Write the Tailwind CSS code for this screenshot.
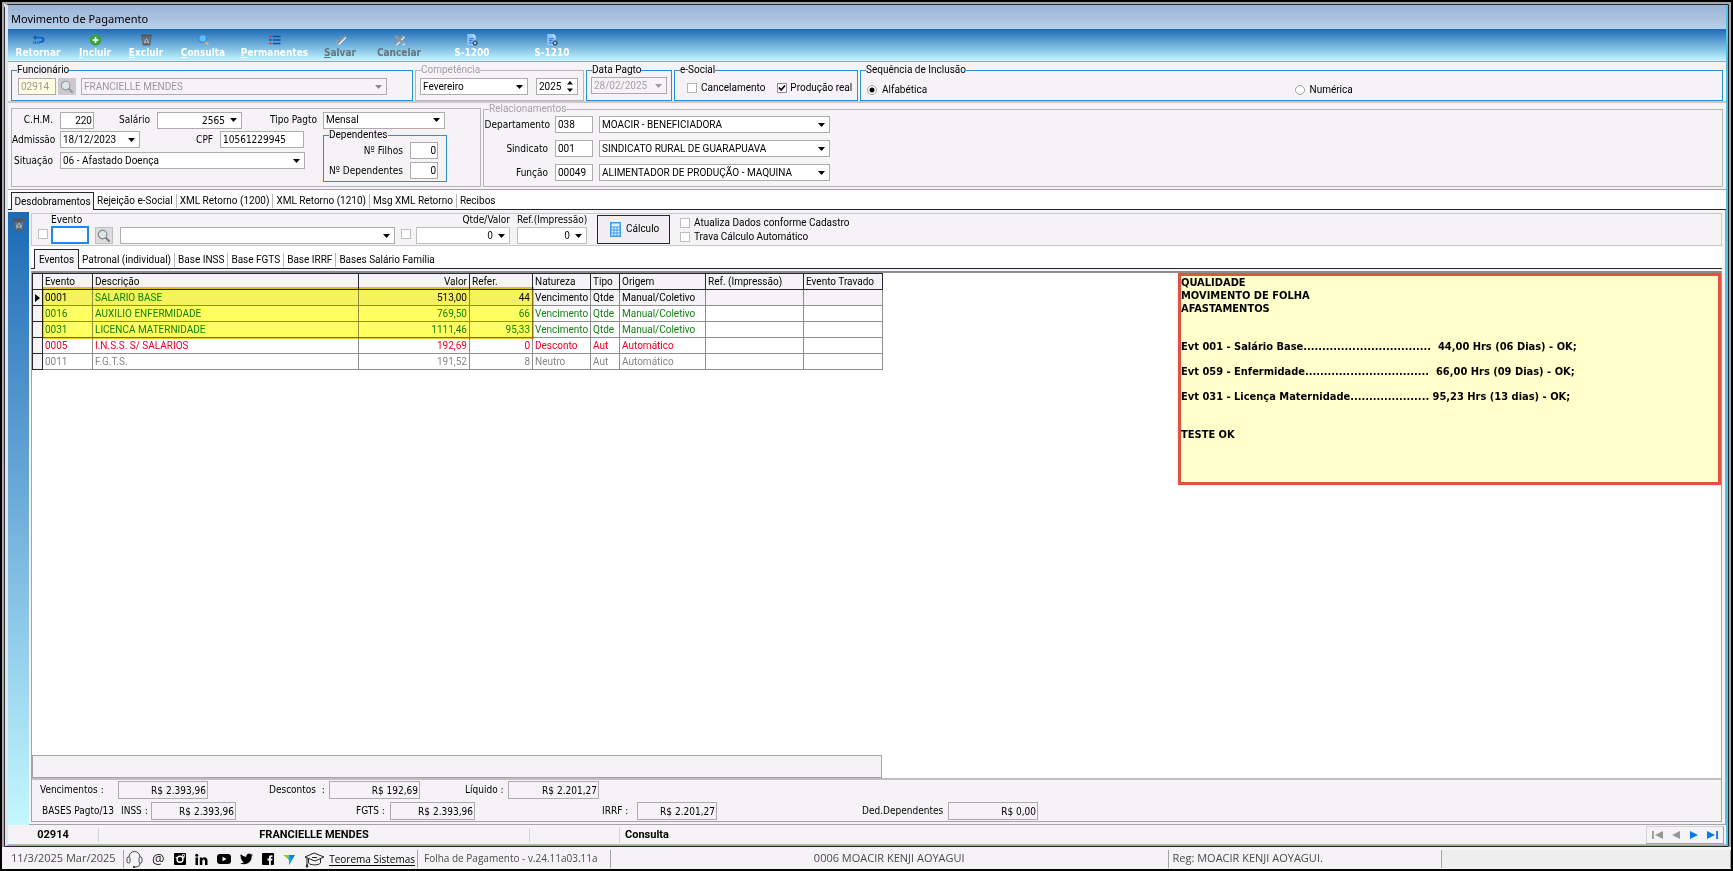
<!DOCTYPE html>
<html lang="pt-BR">
<head>
<meta charset="utf-8">
<title>Movimento de Pagamento</title>
<script src="https://cdn.jsdelivr.net/npm/@tailwindcss/browser@4"></script>
</head>
<body class="bg-black font-['Roboto','Liberation_Sans',sans-serif] text-[10px] leading-[14px] text-black">
<svg class="hidden" aria-hidden="true">
  <symbol id="arrow" viewBox="0 0 7 4"><path d="M0 0h7L3.5 4z" fill="currentColor"/></symbol>
  <symbol id="lens" viewBox="0 0 14 14"><path d="M8.8 8.8 12.6 12.6" stroke="currentColor" stroke-width="2"/><circle cx="5.6" cy="5.6" r="4.3" fill="#d9e6e6" stroke="currentColor" stroke-width="1.1"/></symbol>
  <symbol id="trash" viewBox="0 0 14 13"><path d="M1 .5h12v2.500H1z" fill="#5a5552"/><path d="M1.500 3.500h11L11 12.500H3z" fill="#5b6067"/><path d="M4 4.500 4.800 11M10 4.500 9.200 11" stroke="#8ba3b8" stroke-width=".8"/><path d="m7 5 2.300 4H4.700z" fill="none" stroke="#c4d6e6" stroke-width=".9"/></symbol>
  <symbol id="doc" viewBox="0 0 14 14"><path d="M1 0h7l3 3v10H1z" fill="#8fc8ff"/><path d="M8 0v3h3z" fill="#e4f3ff"/><path d="M3 5.5h5M3 8h4M3 10.5h3" stroke="#0a6fd6" stroke-width="1.2"/><circle cx="10" cy="10.4" r="2.2" fill="none" stroke="#4b5560" stroke-width="1.5"/><path d="M10 7v1M10 13v1M6.700 10.400h1M12.300 10.400h1M7.600 8l.7.700M11.700 12.100l.7.700M12.400 8l-.7.700M8.300 12.100l-.7.700" stroke="#4b5560"/></symbol>
</svg>
<div class="flex min-h-screen flex-col border-2 border-black bg-[#f5f3f6]">
 <main class="flex flex-1 flex-col border-x-2 border-t-2 border-[#aaa8ac]">
 <div class="flex flex-1 flex-col rounded-tl border border-[#26262e] bg-[#f5f3f6]">
 <div class="flex flex-1 flex-col border-r-2 border-b border-l-3 border-[#4fc6e0] border-l-[#dfe6ee]">

  <header class="flex h-[24px] items-center bg-linear-to-b from-[#9ab4d4] to-[#b8cfe9] px-[3px] pt-1">
    <h1 class="font-['Noto_Sans','Open_Sans',sans-serif] text-[11px]">Movimento de Pagamento</h1>
  </header>

  <nav class="flex h-[33px] border-b border-[#a5a3a6] bg-linear-to-b from-[#1a6ab5] to-[#c4f8ff] pt-[5px] font-['DejaVu_Sans_Condensed','DejaVu_Sans',sans-serif] text-[10px] leading-[12px] font-bold text-white [&_svg]:mb-[1px]">
    <button class="flex w-[60px] flex-col items-center"><svg class="h-[12px] w-[13px]" viewBox="0 0 14 14"><path d="M4 1 .5 4.200 4 7.300V5.300h6a1.500 1.500 0 0 1 0 3H8v2h2.500a3.400 3.400 0 0 0 0-7H4z" fill="#0a62c8"/><path d="M1.500 8.500v3M3.500 8.500v3M5.500 8.500v3M7.500 8.500v3" stroke="#0a62c8"/></svg>Retornar</button>
    <button class="flex w-[54px] flex-col items-center"><svg class="h-[12px] w-[13px]" viewBox="0 0 14 14"><circle cx="7" cy="7" r="6.800" fill="#38a338"/><path d="M7 3.500v7M3.500 7h7" stroke="#fff" stroke-width="2"/></svg><span><u>I</u>ncluir</span></button>
    <button class="flex w-[48px] flex-col items-center"><svg class="h-[12px] w-[13px]"><use href="#trash"/></svg><span><u>E</u>xcluir</span></button>
    <button class="flex w-[66px] flex-col items-center"><svg class="h-[12px] w-[13px]" viewBox="0 0 14 14"><path d="m9 9 3.500 3.500" stroke="#e0b95a" stroke-width="2.200"/><circle cx="6" cy="5.500" r="4.500" fill="#62bdf5" stroke="#2c86d8" stroke-width="1.200"/></svg><span><u>C</u>onsulta</span></button>
    <button class="flex w-[77px] flex-col items-center"><svg class="h-[12px] w-[13px]" viewBox="0 0 14 14"><path d="M5 3h9M5 7h9M5 11h9" stroke="#0b4fa8" stroke-width="1.800"/><path d="M1 3h2.500M1 11h2.500" stroke="#d2322e" stroke-width="2"/><path d="M1 7h2.500" stroke="#0b4fa8" stroke-width="2"/></svg><span><u>P</u>ermanentes</span></button>
    <button class="flex w-[54px] flex-col items-center text-[#65737d]"><svg class="h-[12px] w-[13px]" viewBox="0 0 14 14"><path d="m2.500 8 3 3 7.500-7.500" fill="none" stroke="#fff" stroke-width="2.500"/><path d="m1.500 7 3 3L12 2.800" fill="none" stroke="#929292" stroke-width="2.500"/></svg><span><u>S</u>alvar</span></button>
    <button class="flex w-[64px] flex-col items-center text-[#65737d]"><svg class="h-[12px] w-[13px]" viewBox="0 0 14 14"><path d="m3 3 9.500 9.500M12.500 3 3 12.500" stroke="#fff" stroke-width="2.500"/><path d="m2 2 9.500 9.500M11.500 2 2 11.500" stroke="#929292" stroke-width="2.800"/></svg>Cancelar</button>
    <button class="flex w-[82px] flex-col items-center"><svg class="h-[12px] w-[13px]"><use href="#doc"/></svg>S-1200</button>
    <button class="flex w-[78px] flex-col items-center"><svg class="h-[12px] w-[13px]"><use href="#doc"/></svg>S-1210</button>
  </nav>

  <section class="flex gap-[2px] border-b-2 border-[#c9c7ca] px-[3px] pt-[1px]">
    <fieldset class="h-[38px] w-[402px] border border-[#2a90dc]">
      <legend class="ml-[5px]">Funcionário</legend>
      <div class="flex items-center gap-[5px] pt-[1px] pl-[6px]">
        <div class="flex gap-[2px]">
          <input aria-label="Código do funcionário" disabled value="02914" class="h-[17px] w-[38px] border border-[#adabae] bg-[#ffffe1] px-[2px] text-[#9a989b]">
          <button aria-label="Pesquisar funcionário" class="flex h-[17px] w-[18px] items-center justify-center bg-[#cbc9cc] text-[#98969a]"><svg class="h-[14px] w-[14px]"><use href="#lens"/></svg></button>
        </div>
        <div class="grid w-[306px] items-center">
          <select aria-label="Nome do funcionário" disabled class="col-start-1 row-start-1 h-[17px] appearance-none border border-[#adabae] px-[2px] text-[#9a989b] opacity-100"><option>FRANCIELLE MENDES</option></select>
          <svg class="pointer-events-none col-start-1 row-start-1 mr-[5px] h-[4px] w-[7px] justify-self-end text-[#8c8a8d]"><use href="#arrow"/></svg>
        </div>
      </div>
    </fieldset>
    <fieldset class="h-[38px] w-[169px] border border-[#b7b5b8]">
      <legend class="ml-[5px] text-[#a3a1a4]">Competência</legend>
      <div class="flex items-center gap-[8px] pt-[1px] pl-[4px]">
        <div class="grid w-[108px] items-center">
          <select aria-label="Mês" class="col-start-1 row-start-1 h-[17px] appearance-none border border-[#adabae] bg-white px-[2px]"><option>Fevereiro</option></select>
          <svg class="pointer-events-none col-start-1 row-start-1 mr-[5px] h-[4px] w-[7px] justify-self-end"><use href="#arrow"/></svg>
        </div>
        <div class="flex h-[17px] w-[42px] items-center justify-between border border-[#adabae] bg-white pr-[4px]">
          <input aria-label="Ano" value="2025" class="w-[28px] pl-[2px]">
          <svg class="h-[11px] w-[6px]" viewBox="0 0 6 11"><path d="M0 3.500h6L3 0zM0 7.500h6L3 11z"/></svg>
        </div>
      </div>
    </fieldset>
    <fieldset class="h-[38px] w-[86px] border border-[#2a90dc]">
      <legend class="ml-[5px]">Data Pagto</legend>
      <div class="grid items-center px-[4px]">
        <select aria-label="Data Pagto" disabled class="col-start-1 row-start-1 h-[17px] appearance-none border border-[#adabae] px-[2px] text-[#a3a1a4] opacity-100"><option>28/02/2025</option></select>
        <svg class="pointer-events-none col-start-1 row-start-1 mr-[5px] h-[4px] w-[7px] justify-self-end text-[#9c9a9d]"><use href="#arrow"/></svg>
      </div>
    </fieldset>
    <fieldset class="h-[38px] w-[184px] border border-[#2a90dc]">
      <legend class="ml-[5px]">e-Social</legend>
      <div class="flex h-[21px] items-center gap-[12px] pl-[12px] whitespace-nowrap">
        <label class="flex items-center gap-[4px]"><input type="checkbox" class="h-[10px] w-[10px] appearance-none border border-[#b5b3b6] bg-white">Cancelamento</label>
        <label class="flex items-center gap-[3px]"><span class="grid"><input type="checkbox" checked class="col-start-1 row-start-1 h-[10px] w-[10px] appearance-none border border-[#8f8d90] bg-white"><svg class="pointer-events-none col-start-1 row-start-1 h-[10px] w-[10px]" viewBox="0 0 10 10"><path d="m2 4.500 2.200 2.500L8 2.500" fill="none" stroke="#000" stroke-width="1.700"/></svg></span>Produção real</label>
      </div>
    </fieldset>
    <fieldset class="h-[38px] flex-1 border border-[#2a90dc]">
      <legend class="ml-[5px]">Sequência de Inclusão</legend>
      <div class="grid h-[22px] grid-cols-2 items-center pt-[3px] pl-[6px]">
        <label class="flex items-center gap-[5px]"><input type="radio" name="seq" checked class="h-[10px] w-[10px] appearance-none rounded-full border border-[#a5a3a6] bg-[radial-gradient(#000_0_2px,#fff_3px)]">Alfabética</label>
        <label class="flex items-center gap-[5px]"><input type="radio" name="seq" class="h-[10px] w-[10px] appearance-none rounded-full border border-[#a5a3a6] bg-white">Numérica</label>
      </div>
    </fieldset>
  </section>

  <section class="flex gap-[2px] border-b border-[#a5a3a6] px-[3px] pb-[2px]">
    <div class="mt-[5px] flex w-[470px] flex-col border border-[#b7b5b8] pt-[3px] font-['DejaVu_Sans_Condensed','DejaVu_Sans',sans-serif] text-[10px]">
      <div class="flex h-[16px] items-center">
        <label for="chm" class="w-[41px] text-right">C.H.M.</label>
        <input id="chm" value="220" class="ml-[7px] h-[17px] w-[34px] border border-[#adabae] bg-white px-[1px] text-right font-['Roboto','Liberation_Sans',sans-serif]">
        <label for="sal" class="w-[56px] text-right">Salário</label>
        <div class="ml-[7px] grid w-[85px] items-center">
          <input id="sal" value="2565" class="col-start-1 row-start-1 h-[17px] w-full border border-[#adabae] bg-white pr-[16px] text-right">
          <svg class="pointer-events-none col-start-1 row-start-1 mr-[5px] h-[4px] w-[7px] justify-self-end"><use href="#arrow"/></svg>
        </div>
        <label for="tipo" class="w-[75px] text-right">Tipo Pagto</label>
        <div class="ml-[6px] grid w-[122px] items-center font-['Roboto','Liberation_Sans',sans-serif]">
          <select id="tipo" class="col-start-1 row-start-1 h-[17px] appearance-none border border-[#adabae] bg-white px-[2px]"><option>Mensal</option></select>
          <svg class="pointer-events-none col-start-1 row-start-1 mr-[5px] h-[4px] w-[7px] justify-self-end"><use href="#arrow"/></svg>
        </div>
      </div>
      <div class="flex gap-[18px]">
        <div class="flex flex-col gap-[4px] pt-[3px]">
          <div class="flex items-center">
            <label for="adm" class="w-[41px] text-right">Admissão</label>
            <div class="ml-[7px] grid w-[80px] items-center font-['Roboto','Liberation_Sans',sans-serif]">
              <input id="adm" value="18/12/2023" class="col-start-1 row-start-1 h-[17px] w-full border border-[#adabae] bg-white px-[2px]">
              <svg class="pointer-events-none col-start-1 row-start-1 mr-[5px] h-[4px] w-[7px] justify-self-end"><use href="#arrow"/></svg>
            </div>
            <label for="cpf" class="w-[73px] text-right">CPF</label>
            <input id="cpf" value="10561229945" class="ml-[7px] h-[17px] w-[84px] border border-[#adabae] bg-white px-[2px]">
          </div>
          <div class="flex items-center">
            <label for="sit" class="w-[41px] text-right">Situação</label>
            <div class="ml-[7px] grid w-[245px] items-center font-['Roboto','Liberation_Sans',sans-serif]">
              <select id="sit" class="col-start-1 row-start-1 h-[17px] appearance-none border border-[#adabae] bg-white px-[2px]"><option>06 - Afastado Doença</option></select>
              <svg class="pointer-events-none col-start-1 row-start-1 mr-[5px] h-[4px] w-[7px] justify-self-end"><use href="#arrow"/></svg>
            </div>
          </div>
        </div>
        <fieldset class="h-[54px] w-[124px] border border-[#2a90dc]">
          <legend class="ml-[5px] font-['Roboto','Liberation_Sans',sans-serif]">Dependentes</legend>
          <div class="flex flex-col gap-[3px] pr-[8px]">
            <div class="flex items-center justify-end gap-[7px]"><label for="fil">Nº Filhos</label><input id="fil" value="0" class="h-[17px] w-[28px] border border-[#adabae] bg-white px-[1px] text-right font-['Roboto','Liberation_Sans',sans-serif]"></div>
            <div class="flex items-center justify-end gap-[7px]"><label for="dep">Nº Dependentes</label><input id="dep" value="0" class="h-[17px] w-[28px] border border-[#adabae] bg-white px-[1px] text-right font-['Roboto','Liberation_Sans',sans-serif]"></div>
          </div>
        </fieldset>
      </div>
    </div>
    <fieldset class="h-[84px] flex-1 border border-[#b7b5b8]">
      <legend class="ml-[5px] leading-[12px] text-[#a3a1a4]">Relacionamentos</legend>
      <div class="flex flex-col gap-[7px] pt-[1px]">
        <div class="flex items-center">
          <label for="d1" class="w-[66px] text-right font-['DejaVu_Sans_Condensed','DejaVu_Sans',sans-serif]">Departamento</label>
          <input id="d1" value="038" class="ml-[5px] h-[17px] w-[38px] border border-[#adabae] bg-white px-[2px]">
          <div class="ml-[6px] grid w-[231px] items-center">
            <select aria-label="Departamento" class="col-start-1 row-start-1 h-[17px] appearance-none border border-[#adabae] bg-white px-[2px]"><option>MOACIR - BENEFICIADORA</option></select>
            <svg class="pointer-events-none col-start-1 row-start-1 mr-[5px] h-[4px] w-[7px] justify-self-end"><use href="#arrow"/></svg>
          </div>
        </div>
        <div class="flex items-center">
          <label for="d2" class="w-[66px] pr-[2px] text-right font-['DejaVu_Sans_Condensed','DejaVu_Sans',sans-serif]">Sindicato</label>
          <input id="d2" value="001" class="ml-[5px] h-[17px] w-[38px] border border-[#adabae] bg-white px-[2px]">
          <div class="ml-[6px] grid w-[231px] items-center">
            <select aria-label="Sindicato" class="col-start-1 row-start-1 h-[17px] appearance-none border border-[#adabae] bg-white px-[2px]"><option>SINDICATO RURAL DE GUARAPUAVA</option></select>
            <svg class="pointer-events-none col-start-1 row-start-1 mr-[5px] h-[4px] w-[7px] justify-self-end"><use href="#arrow"/></svg>
          </div>
        </div>
        <div class="flex items-center">
          <label for="d3" class="w-[66px] pr-[2px] text-right font-['DejaVu_Sans_Condensed','DejaVu_Sans',sans-serif]">Função</label>
          <input id="d3" value="00049" class="ml-[5px] h-[17px] w-[38px] border border-[#adabae] bg-white px-[2px]">
          <div class="ml-[6px] grid w-[231px] items-center">
            <select aria-label="Função" class="col-start-1 row-start-1 h-[17px] appearance-none border border-[#adabae] bg-white px-[2px]"><option>ALIMENTADOR DE PRODUÇÃO - MAQUINA</option></select>
            <svg class="pointer-events-none col-start-1 row-start-1 mr-[5px] h-[4px] w-[7px] justify-self-end"><use href="#arrow"/></svg>
          </div>
        </div>
      </div>
    </fieldset>
  </section>

  <div class="flex h-[20px] items-end bg-white" role="tablist">
    <div class="h-[19px] w-[3px] border-b border-[#26262e]"></div>
    <button role="tab" class="h-[18px] w-[83px] border-x border-t border-[#26262e] bg-[#f5f3f6]">Desdobramentos</button>
    <div class="flex h-[19px] flex-1 items-center border-b border-[#26262e] pt-[2px]">
      <button role="tab" class="border-r border-[#b7b5b8] px-[3px]">Rejeição e-Social</button>
      <button role="tab" class="border-r border-[#b7b5b8] px-[3px]">XML Retorno (1200)</button>
      <button role="tab" class="border-r border-[#b7b5b8] px-[3px]">XML Retorno (1210)</button>
      <button role="tab" class="border-r border-[#b7b5b8] px-[3px]">Msg XML Retorno</button>
      <button role="tab" class="px-[3px]">Recibos</button>
    </div>
  </div>

  <div class="flex flex-1">
    <aside class="mt-[2px] flex w-[21px] justify-center bg-linear-to-b from-[#1a6ab5] to-[#c4f8ff] pt-[5px]">
      <button aria-label="Excluir evento" class="h-[14px] w-[14px]"><svg class="h-[13px] w-[14px]"><use href="#trash"/></svg></button>
    </aside>
    <div class="flex flex-1 flex-col border-r border-b border-[#a5a3a6] pt-[3px] pr-[3px] pb-[2px] pl-[2px]">
      <section class="flex h-[33px] items-end border border-[#c9c7ca] pb-[1px] pl-[6px]">
        <input type="checkbox" aria-label="Fixar evento" class="mb-[5px] h-[10px] w-[10px] appearance-none border border-[#c0bec1] bg-white">
        <div class="ml-[3px] flex w-[38px] flex-col">
          <label for="ev" class="font-['DejaVu_Sans_Condensed','DejaVu_Sans',sans-serif] leading-[13px]">Evento</label>
          <input id="ev" class="h-[18px] w-[38px] border-2 border-[#2088f4] bg-white outline-none">
        </div>
        <button aria-label="Pesquisar evento" class="ml-[6px] flex h-[17px] w-[18px] items-center justify-center border border-[#c0bec1] bg-[#dddbde] text-[#7c7c7c]"><svg class="h-[14px] w-[14px]"><use href="#lens"/></svg></button>
        <div class="ml-[7px] grid w-[275px] items-center">
          <select aria-label="Descrição do evento" class="col-start-1 row-start-1 h-[17px] appearance-none border border-[#adabae] bg-white"><option></option></select>
          <svg class="pointer-events-none col-start-1 row-start-1 mr-[5px] h-[4px] w-[7px] justify-self-end"><use href="#arrow"/></svg>
        </div>
        <input type="checkbox" aria-label="Fixar valor" class="mb-[5px] ml-[6px] h-[10px] w-[10px] appearance-none border border-[#c0bec1] bg-white">
        <div class="ml-[5px] flex w-[94px] flex-col font-['DejaVu_Sans_Condensed','DejaVu_Sans',sans-serif]">
          <label for="qt" class="text-right">Qtde/Valor</label>
          <div class="grid items-center"><input id="qt" value="0" class="col-start-1 row-start-1 h-[17px] w-full border border-[#c0bec1] bg-white pr-[16px] text-right"><svg class="pointer-events-none col-start-1 row-start-1 mr-[5px] h-[4px] w-[7px] justify-self-end"><use href="#arrow"/></svg></div>
        </div>
        <div class="ml-[7px] flex w-[72px] flex-col font-['DejaVu_Sans_Condensed','DejaVu_Sans',sans-serif]">
          <label for="rf" class="whitespace-nowrap">Ref.(Impressão)</label>
          <div class="grid w-[70px] items-center"><input id="rf" value="0" class="col-start-1 row-start-1 h-[17px] w-full border border-[#c0bec1] bg-white pr-[16px] text-right"><svg class="pointer-events-none col-start-1 row-start-1 mr-[5px] h-[4px] w-[7px] justify-self-end"><use href="#arrow"/></svg></div>
        </div>
        <button class="ml-[8px] flex h-[29px] w-[73px] items-center gap-[5px] self-center border border-[#26262e] bg-[#f1eff2] pl-[12px]"><svg class="h-[15px] w-[11px]" viewBox="0 0 11 15"><path d="M0 0h11v15H0z" fill="#3f9be8"/><path d="M1.500 1.500h8v3h-8z" fill="#d9f0ff"/><path d="M1.500 6.500h8M1.500 9.500h8M1.500 12.500h8" stroke="#d9f0ff" stroke-width="1.800" stroke-dasharray="2 1"/></svg>Cálculo</button>
        <div class="ml-[10px] flex flex-col">
          <label class="flex items-center gap-[4px]"><input type="checkbox" class="h-[10px] w-[10px] appearance-none border border-[#c0bec1] bg-white">Atualiza Dados conforme Cadastro</label>
          <label class="flex items-center gap-[4px]"><input type="checkbox" class="h-[10px] w-[10px] appearance-none border border-[#c0bec1] bg-white">Trava Cálculo Automático</label>
        </div>
      </section>

      <div class="flex h-[23px] items-end bg-white" role="tablist">
        <div class="h-[20px] w-[3px] border-b border-[#26262e]"></div>
        <button role="tab" class="h-[20px] w-[45px] border-x border-t border-[#26262e] bg-[#f5f3f6]">Eventos</button>
        <div class="flex h-[20px] flex-1 items-center border-b border-[#26262e] pt-[2px]">
          <button role="tab" class="border-r border-[#b7b5b8] px-[3px]">Patronal (individual)</button>
          <button role="tab" class="border-r border-[#b7b5b8] px-[3px]">Base INSS</button>
          <button role="tab" class="border-r border-[#b7b5b8] px-[3px]">Base FGTS</button>
          <button role="tab" class="border-r border-[#b7b5b8] px-[3px]">Base IRRF</button>
          <button role="tab" class="px-[3px]">Bases Salário Família</button>
        </div>
      </div>

      <div class="mt-[2px] flex flex-1 flex-col border-x border-[#a5a3a6]">
        <section class="flex flex-1 items-stretch justify-between border-y-2 border-t-[#8f8d90] border-b-[#c0bec1] bg-white">
          <div class="flex w-[850px] flex-col justify-between">
            <div class="relative">
              <table class="w-[850px] table-fixed border-collapse text-left">
                <colgroup><col class="w-[10px]"><col class="w-[50px]"><col class="w-[266px]"><col class="w-[111px]"><col class="w-[63px]"><col class="w-[58px]"><col class="w-[29px]"><col class="w-[86px]"><col class="w-[98px]"><col class="w-[79px]"></colgroup>
                <thead class="bg-[#f5f3f6] [&_th]:h-[16px] [&_th]:border [&_th]:border-[#26262e] [&_th]:px-[2px] [&_th]:font-normal [&_th]:whitespace-nowrap">
                  <tr><th></th><th>Evento</th><th>Descrição</th><th class="text-right">Valor</th><th>Refer.</th><th>Natureza</th><th>Tipo</th><th>Origem</th><th>Ref. (Impressão)</th><th>Evento Travado</th></tr>
                </thead>
                <tbody class="[&_td]:h-[16px] [&_td]:border [&_td]:border-[#8f8d90] [&_td]:px-[2px] [&_td]:whitespace-nowrap [&_td:first-child]:border-[#26262e] [&_td:first-child]:bg-[#f5f3f6]">
                  <tr class="bg-[#f5f3f6]"><td><svg class="h-[8px] w-[5px]" viewBox="0 0 5 8"><path d="M0 0v8l5-4z"/></svg></td><td>0001</td><td class="text-[#158015]">SALARIO BASE</td><td class="text-right">513,00</td><td class="text-right">44</td><td>Vencimento</td><td>Qtde</td><td>Manual/Coletivo</td><td></td><td></td></tr>
                  <tr class="text-[#158015]"><td></td><td>0016</td><td>AUXILIO ENFERMIDADE</td><td class="text-right">769,50</td><td class="text-right">66</td><td>Vencimento</td><td>Qtde</td><td>Manual/Coletivo</td><td></td><td></td></tr>
                  <tr class="text-[#158015]"><td></td><td>0031</td><td>LICENCA MATERNIDADE</td><td class="text-right">1111,46</td><td class="text-right">95,33</td><td>Vencimento</td><td>Qtde</td><td>Manual/Coletivo</td><td></td><td></td></tr>
                  <tr class="text-[#ee0022]"><td></td><td>0005</td><td>I.N.S.S. S/ SALARIOS</td><td class="text-right">192,69</td><td class="text-right">0</td><td>Desconto</td><td>Aut</td><td>Automático</td><td></td><td></td></tr>
                  <tr class="text-[#868686]"><td></td><td>0011</td><td>F.G.T.S.</td><td class="text-right">191,52</td><td class="text-right">8</td><td>Neutro</td><td>Aut</td><td>Automático</td><td></td><td></td></tr>
                </tbody>
              </table>
              <div class="pointer-events-none absolute top-[14px] left-[10px] h-[52px] w-[492px] border-2 border-[#ecc81c] bg-[#ffff60] mix-blend-multiply"></div>
            </div>
            <div class="h-[23px] border border-[#a5a3a6] bg-[#f5f3f6]"></div>
          </div>
          <article class="h-[212px] w-[543px] border-3 border-[#dd5540] bg-[#ffffcc] font-['DejaVu_Sans_Condensed','DejaVu_Sans',sans-serif] text-[11px] leading-[13px] font-bold shadow [&_p]:whitespace-pre">
            <p>QUALIDADE</p>
            <p>MOVIMENTO DE FOLHA</p>
            <p>AFASTAMENTOS</p>
            <p class="mt-[25px]">Evt 001 - Salário Base..................................  44,00 Hrs (06 Dias) - OK;</p>
            <p class="mt-[12px]">Evt 059 - Enfermidade.................................  66,00 Hrs (09 Dias) - OK;</p>
            <p class="mt-[12px]">Evt 031 - Licença Maternidade..................... 95,23 Hrs (13 dias) - OK;</p>
            <p class="mt-[25px]">TESTE OK</p>
          </article>
        </section>

        <section class="flex flex-col gap-[3px] pt-[1px] pb-[1px] font-['DejaVu_Sans_Condensed','DejaVu_Sans',sans-serif]">
          <div class="flex items-center">
            <label for="t1" class="w-[86px] pl-[8px]">Vencimentos :</label>
            <input id="t1" readonly value="R$ 2.393,96" class="h-[18px] w-[90px] border border-[#adabae] px-[1px] text-right">
            <label for="t2" class="ml-[61px] w-[60px]">Descontos&nbsp; :</label>
            <input id="t2" readonly value="R$ 192,69" class="h-[18px] w-[91px] border border-[#adabae] px-[1px] text-right">
            <label for="t3" class="ml-[45px] w-[43px]">Líquido :</label>
            <input id="t3" readonly value="R$ 2.201,27" class="h-[18px] w-[91px] border border-[#adabae] px-[1px] text-right">
          </div>
          <div class="flex items-center">
            <span class="w-[89px] pl-[10px] whitespace-nowrap">BASES Pagto/13</span>
            <label for="b1" class="w-[30px] whitespace-nowrap">INSS :</label>
            <input id="b1" readonly value="R$ 2.393,96" class="h-[18px] w-[85px] border border-[#adabae] px-[1px] text-right">
            <label for="b2" class="ml-[120px] w-[34px]">FGTS :</label>
            <input id="b2" readonly value="R$ 2.393,96" class="h-[18px] w-[85px] border border-[#adabae] px-[1px] text-right">
            <label for="b3" class="ml-[127px] w-[35px]">IRRF :</label>
            <input id="b3" readonly value="R$ 2.201,27" class="h-[18px] w-[80px] border border-[#adabae] px-[1px] text-right">
            <label for="b4" class="ml-[145px] w-[86px]">Ded.Dependentes</label>
            <input id="b4" readonly value="R$ 0,00" class="h-[18px] w-[90px] border border-[#adabae] px-[1px] text-right">
          </div>
        </section>
        <div class="border-b border-[#a5a3a6]"></div>
      </div>
    </div>
  </div>

  <footer class="flex h-[20px] items-center border-b border-[#b7b5b8] pt-[1px] text-[11px] font-bold">
    <span class="w-[91px] border-r border-[#d5d3d6] text-center">02914</span>
    <span class="w-[431px] border-r border-[#d5d3d6] text-center">FRANCIELLE MENDES</span>
    <span class="h-[16px] w-[90px] border-r border-[#d5d3d6]"></span>
    <span class="flex-1 pl-[5px]">Consulta</span>
    <div class="mr-[2px] flex h-[18px] w-[78px] items-center justify-around border border-[#d5d3d6] border-r-[#a5a3a6] border-b-[#a5a3a6]">
      <button aria-label="Primeiro" class="text-[#989898]"><svg class="h-[8px] w-[11px]" viewBox="0 0 11 8"><path d="M0 0h1.800v8H0zM11 0v8L3 4z" fill="currentColor"/></svg></button>
      <button aria-label="Anterior" class="text-[#989898]"><svg class="h-[8px] w-[8px]" viewBox="0 0 8 8"><path d="M8 0v8L0 4z" fill="currentColor"/></svg></button>
      <button aria-label="Próximo" class="text-[#0a78e6]"><svg class="h-[8px] w-[8px]" viewBox="0 0 8 8"><path d="M0 0v8l8-4z" fill="currentColor"/></svg></button>
      <button aria-label="Último" class="text-[#0a78e6]"><svg class="h-[8px] w-[11px]" viewBox="0 0 11 8"><path d="M11 0H9.200v8H11zM0 0v8l8-4z" fill="currentColor"/></svg></button>
    </div>
  </footer>
 </div>
 </div>
 </main>

 <footer class="flex h-[22px] items-center pt-[2px] font-['Open_Sans','Noto_Sans',sans-serif] text-[11px] leading-[16px] text-[#4a4a4a] [&>span]:h-[18px] [&>span]:border-r [&>span]:border-[#a5a3a6] [&>span]:whitespace-nowrap">
   <span class="w-[122px] pl-[9px]">11/3/2025 Mar/2025</span>
   <nav class="flex h-[18px] w-[294px] items-center justify-between border-r border-[#a5a3a6] px-[2px] text-black">
     <a href="#" aria-label="Suporte"><svg class="h-[17px] w-[17px]" viewBox="0 0 17 17" fill="none" stroke="#444"><path d="M3 6a5.500 5.500 0 0 1 11 0"/><rect x="1" y="6" width="3" height="6" rx="1.500"/><rect x="13" y="6" width="3" height="6" rx="1.500"/><path d="M14 12c0 3-2 4-5 4"/><path d="M7 16h2" stroke-width="2"/></svg></a>
     <a href="#" aria-label="E-mail" class="text-[14px] text-[#222]">@</a>
     <a href="#" aria-label="Instagram"><svg class="h-[12px] w-[12px]" viewBox="0 0 12 12"><rect width="12" height="12" rx="1"/><path d="M1.500 4.500h9M8.500 1.500h2v2h-2z" stroke="#fff" stroke-width=".8"/><circle cx="6" cy="6.300" r="3" stroke="#fff" stroke-width="1.400"/></svg></a>
     <a href="#" aria-label="LinkedIn"><svg class="h-[13px] w-[13px]" viewBox="0 0 13 13"><path d="M.5 4.500H3V12H.5zM4.800 4.500h2.300v1C8.500 3.600 12.500 4 12.500 7.500V12H10V8c0-2.200-2.700-2-2.700 0v4H4.800z"/><circle cx="1.800" cy="2.200" r="1.500"/></svg></a>
     <a href="#" aria-label="YouTube"><svg class="h-[12px] w-[14px]" viewBox="0 0 14 12"><rect y="1" width="14" height="10" rx="3"/><path d="M5.500 3.700v4.600l4-2.300z" fill="#fff"/></svg></a>
     <a href="#" aria-label="Twitter"><svg class="h-[12px] w-[13px]" viewBox="0 0 24 20"><path d="M24 2.400a10 10 0 0 1-2.800.8A5 5 0 0 0 23.300.5a10 10 0 0 1-3.100 1.200 4.900 4.900 0 0 0-8.400 4.500A14 14 0 0 1 1.700 1a4.900 4.900 0 0 0 1.500 6.600 5 5 0 0 1-2.200-.6 4.900 4.900 0 0 0 3.900 4.900 5 5 0 0 1-2.200.1 4.900 4.900 0 0 0 4.600 3.400A10 10 0 0 1 0 17.500 14 14 0 0 0 21.500 5z"/></svg></a>
     <a href="#" aria-label="Facebook"><svg class="h-[12px] w-[12px]" viewBox="0 0 12 12"><rect width="12" height="12" rx="1"/><path d="M7 12V7.500H5.500v-2H7V4.300C7 2.700 8 2 10.500 2.200V4H9.300q-.5 0-.5.600v.9h1.700l-.3 2H8.800V12z" fill="#fff"/></svg></a>
     <a href="#" aria-label="Teorema"><svg class="h-[11px] w-[12px]" viewBox="0 0 12 11"><path d="M0 1h6L5 5z" fill="#8fd400"/><path d="M6 1h6L9 6 6 11z" fill="#0a7de0"/><path d="M5 5 6 1l3 5-3 5V6z" fill="#19a9c4"/></svg></a>
     <div class="flex items-center gap-[4px]">
       <a href="#" aria-label="Treinamento"><svg class="h-[17px] w-[21px]" viewBox="0 0 21 17" fill="none" stroke="#222"><path d="M1 6 10 2l10 4-9 4z"/><path d="M4.500 8v4c2 2.500 10 2.500 12 0V8M3 7v6l-1 3h2l-1-3M8 6.500h5"/></svg></a>
       <a href="#" class="border-b border-black text-[10px] leading-[12px] whitespace-nowrap">Teorema Sistemas</a>
     </div>
   </nav>
   <span class="w-[193px] pl-[6px] text-[10px]">Folha de Pagamento - v.24.11a03.11a</span>
   <span class="flex-56 text-center">0006 MOACIR KENJI AOYAGUI</span>
   <span class="flex-27 pl-[4px]">Reg: MOACIR KENJI AOYAGUI.</span>
   <span class="flex-29 bg-[#eeeeee]"></span>
 </footer>
</div>
</body>
</html>
